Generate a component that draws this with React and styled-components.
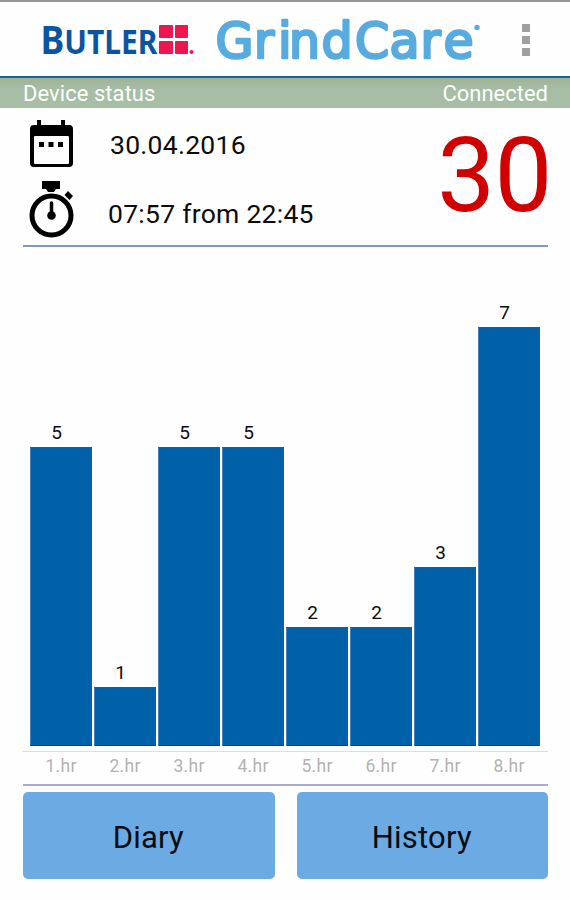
import React from "react";
import styled, { createGlobalStyle } from "styled-components";

const GlobalStyle = createGlobalStyle`
  * { box-sizing: border-box; }
  body { margin: 0; background: #fefefe; }
`;

const Screen = styled.div`
  width: 570px;
  height: 900px;
  overflow: hidden;
  display: flex;
  flex-direction: column;
  background: #fefefe;
  color: #0b0b0b;
  font-family: Roboto, "Liberation Sans", sans-serif;
`;

const Header = styled.header`
  height: 78px;
  flex: none;
  display: flex;
  border-top: 2px solid #979797;
  border-bottom: 2px solid #1b6496;
`;

const Logo = styled.svg`
  display: block;
  flex: none;
`;

const Brand = styled.text`
  font-family: "Noto Sans", sans-serif;
  font-weight: 700;
  font-size: 33.5px;
  fill: #0b55a0;
`;

const BrandInitial = styled.tspan`
  font-size: 40px;
`;

const Product = styled.text`
  font-family: "DejaVu Sans", sans-serif;
  font-size: 49px;
  fill: #57abdf;
  stroke: #57abdf;
  stroke-width: 2.6px;
  stroke-linejoin: round;
`;

const MenuButton = styled.button`
  width: 40px;
  padding: 22px 0 0 26px;
  border: 0;
  background: none;
  display: flex;
  flex-direction: column;
  gap: 4px;
`;

const MenuDot = styled.span`
  width: 8px;
  height: 8px;
  background: #9f9f9f;
`;

const StatusBar = styled.div`
  height: 30px;
  flex: none;
  display: flex;
  justify-content: space-between;
  padding: 2px 22px 0 23px;
  background: linear-gradient(#9fb399, #a7bca4 35%, #a9bea6);
  color: #fbfdfb;
  font-size: 22px;
  line-height: 28px;
`;

const StatusText = styled.span`
  letter-spacing: ${(p) => p.$spacing || 0}px;
`;

const Content = styled.main`
  flex: 1;
  display: flex;
  flex-direction: column;
  margin: 0 22px 0 23px;
`;

const Summary = styled.section`
  height: 139px;
  flex: none;
  display: flex;
  justify-content: space-between;
  border-bottom: 2px solid #8099c4;
`;

const Facts = styled.div`
  display: flex;
  flex-direction: column;
  padding: 10px 0 0 4px;
`;

const Fact = styled.div`
  height: ${(p) => p.$height}px;
  display: flex;
  gap: ${(p) => p.$gap}px;
  font-size: 26.5px;
  line-height: ${(p) => p.$line}px;
  letter-spacing: ${(p) => p.$spacing}px;
  white-space: nowrap;
`;

const FactIcon = styled.svg`
  display: block;
  flex: none;
`;

const Total = styled.div`
  font-size: 103px;
  line-height: 120px;
  padding-top: 8px;
  letter-spacing: -0.5px;
  margin-right: -4px;
  color: #d00000;
`;

const Chart = styled.section`
  height: 505px;
  flex: none;
  display: flex;
  align-items: flex-end;
  gap: 2px;
  padding: 0 6px 5px 7px;
  border-bottom: 1px solid #dcdce4;
`;

const Column = styled.div`
  width: 62px;
  display: flex;
  flex-direction: column;
`;

const Value = styled.span`
  height: 27px;
  padding-right: 9px;
  font-size: 19px;
  line-height: 25px;
  text-align: center;
`;

const Bar = styled.div`
  height: ${(p) => p.$value * 60 - 1}px;
  background: #0060a8;
  border: 1px solid #1c59ad;
  border-left-color: #477fc1;
  border-bottom-color: #063fa5;
`;

const Axis = styled.div`
  height: 34px;
  flex: none;
  display: flex;
  gap: 2px;
  padding: 1px 6px 0 7px;
  border-bottom: 2px solid #a9abcf;
`;

const AxisLabel = styled.span`
  width: 62px;
  font-size: 17.5px;
  line-height: 26px;
  letter-spacing: 0.3px;
  text-align: center;
  color: #b3b3b3;
`;

const Actions = styled.nav`
  display: flex;
  gap: 22px;
  padding-top: 6px;
`;

const ActionButton = styled.button`
  flex: 1;
  height: 87px;
  border: 0;
  border-radius: 5px;
  background: #6baae3;
  padding: 3px 1px 0 0;
  font-family: inherit;
  font-size: 31px;
  letter-spacing: 0.2px;
  color: #080d12;
`;

const hours = [5, 1, 5, 5, 2, 2, 3, 7];

function Logos() {
  return (
    <Logo width="496" height="74" viewBox="0 2 496 74">
      <Brand y="54" textLength="117" lengthAdjust="spacingAndGlyphs" x="40.500">
        <BrandInitial>B</BrandInitial>UTLER
      </Brand>
      <g fill="#ee164f">
        <rect x="159" y="25" width="14" height="13" rx="1" />
        <rect x="175" y="25" width="13" height="13" rx="1" />
        <rect x="159" y="41" width="14" height="13" rx="1" />
        <rect x="175" y="41" width="13" height="13" rx="1" />
        <circle cx="191.5" cy="52" r="2" />
      </g>
      <Product y="57.500" x="215.500 254 278 289 321.500 355 389.500 420.500 443.500">GrindCare</Product>
      <circle cx="477" cy="27.500" r="2.700" fill="#57abdf" />
    </Logo>
  );
}

function CalendarIcon() {
  return (
    <FactIcon width="48" height="54" viewBox="27 118 48 54">
      <path d="M37 120h4v5h20v-5h4v5h4q4 0 4 4v34q0 4-4 4H34q-4 0-4-4v-34q0-4 4-4h3z" />
      <rect x="34" y="136" width="35" height="28" rx="1" fill="#fefefe" />
      <path d="M39 142h5v5h-5zM48.500 142h5v5h-5zM58 142h5v5h-5z" />
    </FactIcon>
  );
}

function StopwatchIcon() {
  return (
    <FactIcon width="48" height="62" viewBox="27 178 48 62">
      <path d="M42 181h18v8h-4l-2 3h-6l-2-3h-4zM68 191l5 5-3.500 4-5-5z" />
      <circle cx="51.500" cy="215.500" r="19.500" fill="none" stroke="#000" strokeWidth="5" />
      <path d="M51.500 203v12" stroke="#000" strokeWidth="3.500" strokeLinecap="round" />
      <circle cx="51.500" cy="215.500" r="4.300" />
    </FactIcon>
  );
}

export default function App() {
  return (
    <>
      <GlobalStyle />
      <Screen>
        <Header>
          <Logos />
          <MenuButton aria-label="Menu">
            <MenuDot />
            <MenuDot />
            <MenuDot />
          </MenuButton>
        </Header>
        <StatusBar>
          <StatusText $spacing={0.05}>Device status</StatusText>
          <StatusText>Connected</StatusText>
        </StatusBar>
        <Content>
          <Summary>
            <Facts>
              <Fact $height={60} $gap={35} $line={54} $spacing={0.27}>
                <CalendarIcon />
                30.04.2016
              </Fact>
              <Fact $height={62} $gap={33} $line={72} $spacing={0.27}>
                <StopwatchIcon />
                07:57 from 22:45
              </Fact>
            </Facts>
            <Total>30</Total>
          </Summary>
          <Chart>
            {hours.map((value, i) => (
              <Column key={i}>
                <Value>{value}</Value>
                <Bar $value={value} />
              </Column>
            ))}
          </Chart>
          <Axis>
            {hours.map((_, i) => (
              <AxisLabel key={i}>{`${i + 1}.hr`}</AxisLabel>
            ))}
          </Axis>
          <Actions>
            <ActionButton>Diary</ActionButton>
            <ActionButton>History</ActionButton>
          </Actions>
        </Content>
      </Screen>
    </>
  );
}
